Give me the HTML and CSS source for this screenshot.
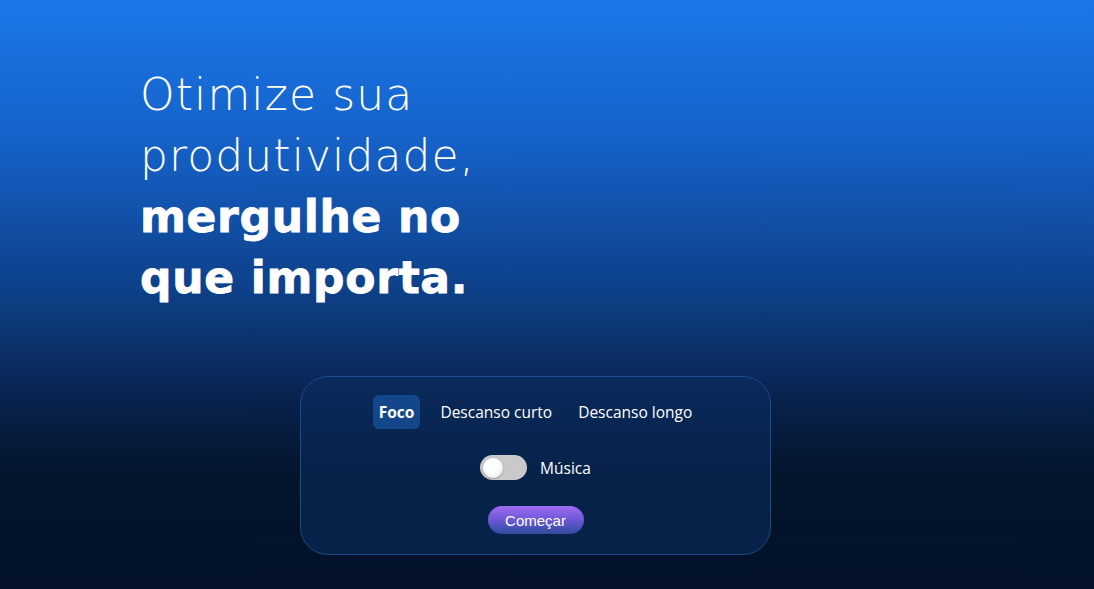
FILE: index.html
```html
<!DOCTYPE html>
<html lang="pt-BR">
<head>
<meta charset="utf-8">
<title>Pomodoro</title>
<link rel="stylesheet" href="styles.css">
</head>
<body>
<main class="page">
  <h1 class="hero">
    <span class="light">Otimize sua</span>
    <span class="light">produtividade,</span>
    <strong class="bold">mergulhe no</strong>
    <strong class="bold">que importa.</strong>
  </h1>
  <section class="card">
    <nav class="tabs">
      <button class="tab active">Foco</button>
      <button class="tab">Descanso curto</button>
      <button class="tab">Descanso longo</button>
    </nav>
    <label class="music">
      <span class="toggle"><span class="knob"></span></span>
      <span class="music-label">Música</span>
    </label>
    <button class="start">Começar</button>
  </section>
</main>
</body>
</html>
```

FILE: styles.css
```css
* { box-sizing: border-box; }
html, body { margin: 0; height: 100%; }
body {
  background: linear-gradient(180deg, #1a78ea 0%, #1560c6 25%, #0d3f86 50%, #08224c 68%, #04152e 80%, #03112a 100%);
  color: #fff;
  font-family: "Inter", "Liberation Sans", sans-serif;
  overflow: hidden;
}
.page {
  display: flex;
  flex-direction: column;
  padding: 64px 0 0 140px;
}
.hero {
  margin: 0;
  display: flex;
  flex-direction: column;
  font-size: 44px;
  line-height: 61px;
  font-weight: 300;
}
.light {
  font-family: "DejaVu Sans", "Inter", sans-serif;
  font-weight: 200;
  letter-spacing: 1.1px;
}
.bold {
  font-family: "DejaVu Sans", "Inter", sans-serif;
  font-weight: 700;
  letter-spacing: 0.7px;
  -webkit-text-stroke: 0.8px #fff;
}
.card {
  margin: 68px 0 0 160px;
  width: 471px;
  height: 179px;
  border-radius: 28px;
  border: 1px solid #1b4a8e;
  background: rgba(11, 46, 96, 0.55);
  display: flex;
  flex-direction: column;
  align-items: center;
  padding-top: 18px;
}
.tabs {
  display: flex;
  gap: 14px;
  align-items: center;
}
.tab {
  background: transparent;
  border: 0;
  color: #fff;
  font-family: "Open Sans", "Liberation Sans", sans-serif;
  font-size: 15.5px;
  height: 34px;
  padding: 0 6px;
  border-radius: 6px;
  cursor: pointer;
}
.tab.active {
  background: #14478a;
  font-weight: 700;
}
.music {
  display: flex;
  align-items: center;
  gap: 13px;
  margin-top: 26px;
}
.toggle {
  width: 47px;
  height: 25px;
  border-radius: 13px;
  background: #c9c9c9;
  display: flex;
  align-items: center;
  padding-left: 3px;
}
.knob {
  width: 20px;
  height: 20px;
  border-radius: 50%;
  background: radial-gradient(circle at 40% 35%, #ffffff 40%, #e4e4e4 100%);
  box-shadow: 0 1px 2px rgba(0,0,0,0.25);
}
.music-label {
  font-family: "Open Sans", "Liberation Sans", sans-serif;
  font-size: 15.5px;
  color: #fff;
}
.start {
  margin-top: 26px;
  width: 96px;
  height: 28px;
  border: 0;
  border-radius: 14px;
  background: linear-gradient(180deg, #a06cf2 0%, #6a58d6 50%, #2f4b9c 100%);
  color: #fff;
  font-family: "Liberation Sans", Arial, sans-serif;
  font-size: 15px;
}
```
